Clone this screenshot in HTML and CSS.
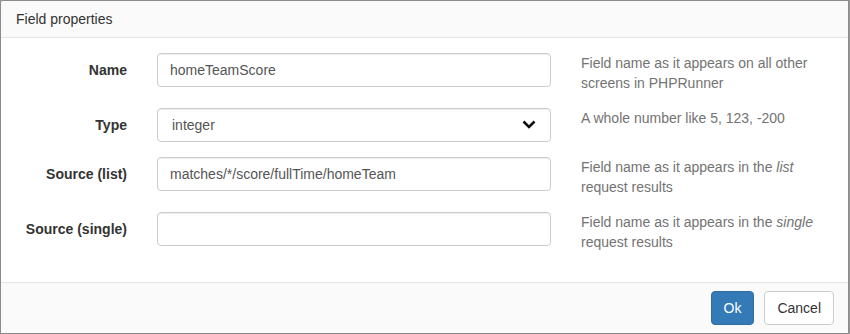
FILE: index.html
```html
<!DOCTYPE html>
<html lang="en">
<head>
    <meta charset="UTF-8">
    <title>Field properties</title>
    <link rel="stylesheet" href="styles.css">
</head>
<body>

    <div class="dialog">
        <div class="dialog-header">Field properties</div>

        <div class="dialog-body">
            <!-- Name -->
            <div class="form-row">
                <label class="field-label">Name</label>
                <input class="field-input" type="text" value="homeTeamScore">
                <div class="field-help">Field name as it appears on all other screens in PHPRunner</div>
            </div>

            <!-- Type -->
            <div class="form-row">
                <label class="field-label">Type</label>
                <div class="select-wrap">
                    <select class="field-input">
                        <option>integer</option>
                        <option>string</option>
                        <option>float</option>
                    </select>
                    <svg class="select-arrow" width="14" height="9" viewBox="0 0 14 9">
                        <path d="M1.5 1.5 L7 7 L12.5 1.5" fill="none" stroke="#111" stroke-width="2.6"/>
                    </svg>
                </div>
                <div class="field-help">A whole number like 5, 123, -200</div>
            </div>

            <!-- Source (list) -->
            <div class="form-row">
                <label class="field-label">Source (list)</label>
                <input class="field-input" type="text" value="matches/*/score/fullTime/homeTeam">
                <div class="field-help">Field name as it appears in the <i>list</i> request results</div>
            </div>

            <!-- Source (single) -->
            <div class="form-row">
                <label class="field-label">Source (single)</label>
                <input class="field-input" type="text" value="">
                <div class="field-help">Field name as it appears in the <i>single</i> request results</div>
            </div>
        </div>

        <div class="dialog-footer">
            <button class="btn btn-primary">Ok</button>
            <button class="btn btn-default">Cancel</button>
        </div>
    </div>

</body>
</html>
```

FILE: styles.css
```css
body {
    font-family: "Liberation Sans", Arial, sans-serif;
    font-size: 14px;
    line-height: 20px;
    color: #333;
    margin: 0;
    padding: 0;
    background-color: #9a9a9a;
}

/* Dialog frame */
.dialog {
    width: 847px;
    height: 332px;
    border: 1px solid #8a8a8a;
    border-top-left-radius: 3px;
    background-color: #fff;
    display: flex;
    flex-direction: column;
    overflow: hidden;
}
.dialog-header {
    height: 20px;
    padding: 8px 15px;
    background-color: #fafafa;
    border-bottom: 1px solid #e5e5e5;
}
.dialog-body {
    flex: 1;
    padding: 15px;
}
.dialog-footer {
    display: flex;
    justify-content: flex-end;
    align-items: center;
    gap: 10px;
    height: 50px;
    padding: 0 14px;
    background-color: #fafafa;
    border-top: 1px solid #e5e5e5;
}

/* Form rows */
.form-row {
    display: grid;
    grid-template-columns: 111px 394px 1fr;
    column-gap: 30px;
    align-items: start;
    margin-bottom: 15px;
}
.form-row:last-child {
    margin-bottom: 0;
}
.field-label {
    font-weight: bold;
    text-align: right;
    padding-top: 7px;
}
.field-input {
    box-sizing: border-box;
    width: 100%;
    height: 34px;
    padding: 6px 12px;
    font-family: inherit;
    font-size: 14px;
    color: #555;
    background-color: #fff;
    border: 1px solid #ccc;
    border-radius: 4px;
    box-shadow: inset 0 1px 1px rgba(0, 0, 0, 0.075);
    margin: 0;
}
select.field-input {
    appearance: none;
    -webkit-appearance: none;
    padding-left: 14px;
}
.select-wrap {
    position: relative;
}
.select-arrow {
    position: absolute;
    right: 15px;
    top: 12px;
    pointer-events: none;
}
.field-help {
    color: #737373;
}

/* Buttons */
.btn {
    box-sizing: border-box;
    height: 34px;
    padding: 6px 12px;
    font-family: inherit;
    font-size: 14px;
    line-height: 20px;
    border-radius: 4px;
    border: 1px solid transparent;
    cursor: pointer;
}
.btn-primary {
    background-color: #337ab7;
    border-color: #2e6da4;
    color: #fff;
}
.btn-default {
    background-color: #fff;
    border-color: #ccc;
    color: #333;
}
```
